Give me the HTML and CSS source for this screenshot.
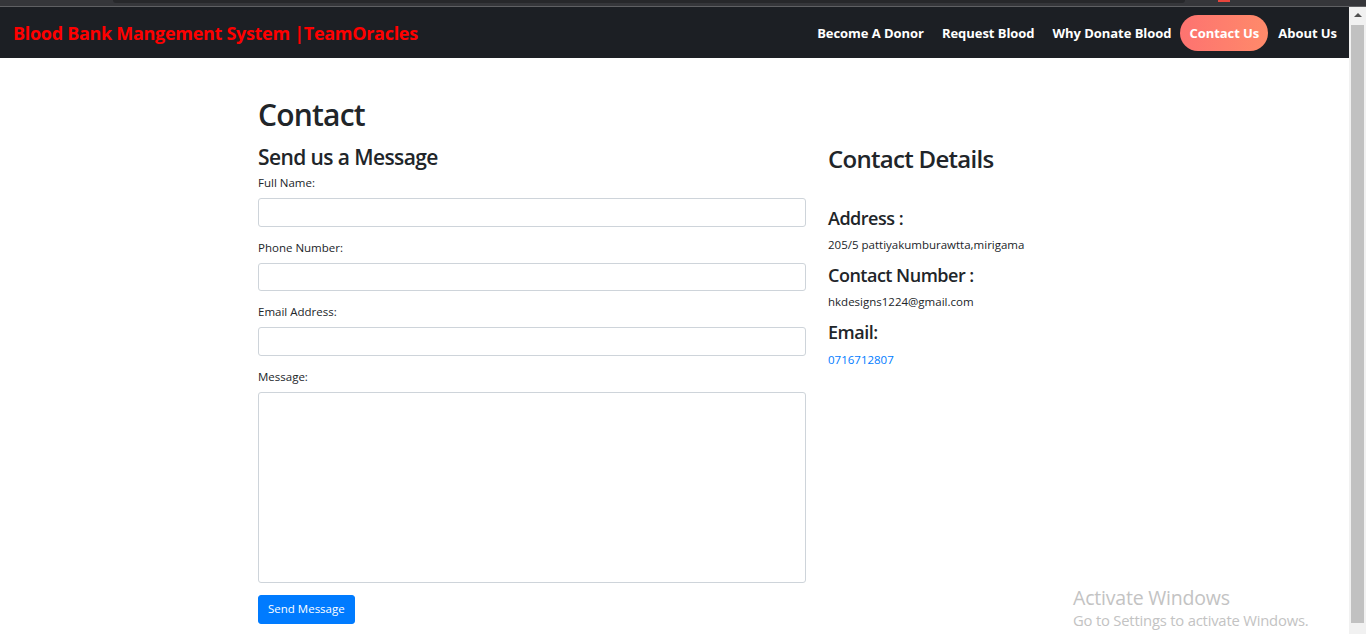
FILE: index.html
```html
<!DOCTYPE html>
<html lang="en">
<head>
<meta charset="utf-8">
<title>Contact | Blood Bank Mangement System</title>
<link rel="stylesheet" href="styles.css">
</head>
<body>
<div class="chrome">
  <div class="chrome-tabs"></div>
  <div class="chrome-rec"></div>
</div>
<div class="window">
  <div class="page">
    <nav class="navbar">
      <a class="brand" href="#">Blood Bank Mangement System |TeamOracles</a>
      <ul class="nav">
        <li><a class="nav-link" href="#">Become A Donor</a></li>
        <li><a class="nav-link" href="#">Request Blood</a></li>
        <li><a class="nav-link" href="#">Why Donate Blood</a></li>
        <li><a class="nav-link active" href="#">Contact Us</a></li>
        <li><a class="nav-link" href="#">About Us</a></li>
      </ul>
    </nav>
    <main class="container">
      <h1 class="title">Contact</h1>
      <div class="row">
        <section class="col-form">
          <h3 class="sub">Send us a Message</h3>
          <form>
            <div class="group">
              <label>Full Name:</label>
              <input class="control" type="text">
            </div>
            <div class="group">
              <label>Phone Number:</label>
              <input class="control" type="text">
            </div>
            <div class="group">
              <label>Email Address:</label>
              <input class="control" type="text">
            </div>
            <div class="group">
              <label>Message:</label>
              <textarea class="control area"></textarea>
            </div>
            <button class="btn" type="button">Send Message</button>
          </form>
        </section>
        <section class="col-info">
          <h2 class="details">Contact Details</h2>
          <h4 class="item first">Address :</h4>
          <p class="val">205/5 pattiyakumburawtta,mirigama</p>
          <h4 class="item">Contact Number :</h4>
          <p class="val">hkdesigns1224@gmail.com</p>
          <h4 class="item">Email:</h4>
          <p class="val"><a class="link" href="#">0716712807</a></p>
        </section>
      </div>
    </main>
  </div>
  <div class="scrollbar">
    <div class="arrow"></div>
    <div class="thumb"></div>
  </div>
</div>
<div class="watermark">
  <div class="wm-title">Activate Windows</div>
  <div class="wm-sub">Go to Settings to activate Windows.</div>
</div>
</body>
</html>
```
FILE: styles.css
```css
* { box-sizing: border-box; }
html, body { margin: 0; padding: 0; }
body {
  width: 1366px;
  height: 634px;
  overflow: hidden;
  font-family: "Open Sans", "Noto Sans", sans-serif;
  color: #212529;
  background: #fff;
  position: relative;
}
.chrome {
  height: 7px;
  background: #35363a;
  border-bottom: 1px solid #5f6063;
  display: flex;
  align-items: flex-start;
}
.chrome-tabs {
  width: 1072px;
  height: 3px;
  background: #27282b;
  border-bottom-left-radius: 4px;
  border-bottom-right-radius: 4px;
  margin-left: 113px;
}
.chrome-rec {
  width: 12px;
  height: 2px;
  background: #e8453c;
  margin-left: 33px;
}
.window {
  display: flex;
  height: 627px;
}
.page {
  flex: 1;
  min-width: 0;
}
.navbar {
  height: 51px;
  background: #1c1f24;
  display: flex;
  align-items: center;
  padding: 0 3px 0 13px;
}
.brand {
  color: #ff0000;
  font-weight: 700;
  font-size: 18px;
  text-decoration: none;
  letter-spacing: -0.3px;
}
.nav {
  list-style: none;
  margin: 0 0 0 auto;
  padding: 0;
  display: flex;
  align-items: center;
}
.nav-link {
  display: block;
  color: #fff;
  font-weight: 700;
  font-size: 13px;
  text-decoration: none;
  padding: 0 9px;
  line-height: 36px;
  height: 36px;
  letter-spacing: -0.05px;
}
.nav-link.active {
  background: linear-gradient(90deg, #fd7370, #ff8a6a);
  border-radius: 18px;
  margin-right: 1px;
}
.container {
  width: 855px;
  margin: 0 auto;
  padding: 39px 11px 0;
}
.title {
  font-size: 30px;
  font-weight: 600;
  line-height: 36px;
  margin: 0 0 12px;
  letter-spacing: -0.8px;
}
.row {
  display: grid;
  grid-template-columns: 548px 1fr;
  column-gap: 22px;
}
.sub {
  font-size: 21px;
  font-weight: 600;
  line-height: 25.2px;
  margin: 0 0 4px;
  letter-spacing: -0.6px;
}
.group {
  margin-bottom: 12px;
}
label {
  display: block;
  font-size: 11.5px;
  line-height: 18px;
  margin-bottom: 6px;
  color: #212529;
}
.control {
  display: block;
  width: 100%;
  height: 28.5px;
  border: 1px solid #ced4da;
  border-radius: 3px;
  background: #fff;
  font: inherit;
  margin: 0;
  padding: 0;
}
.area {
  height: 191px;
  resize: none;
}
.btn {
  display: block;
  height: 29px;
  padding: 0 9px;
  background: #007bff;
  border: 1px solid #007bff;
  border-radius: 3px;
  color: #fff;
  font-family: inherit;
  font-size: 11.5px;
  line-height: 26px;
}
.details {
  font-size: 24px;
  font-weight: 600;
  line-height: 28.8px;
  margin: 0 0 6px;
  letter-spacing: -0.7px;
}
.item {
  font-size: 18px;
  font-weight: 600;
  line-height: 21.6px;
  margin: 0 0 7px;
  letter-spacing: -0.5px;
}
.item.first {
  margin-top: 34px;
}
.val {
  font-size: 11.5px;
  line-height: 18px;
  margin: 0 0 10.5px;
}
.link {
  color: #007bff;
  text-decoration: none;
}
.scrollbar {
  width: 17px;
  flex: none;
  background: #f1f1f1;
  display: flex;
  flex-direction: column;
  align-items: center;
  padding-top: 6px;
}
.arrow {
  width: 0;
  height: 0;
  border-left: 4px solid transparent;
  border-right: 4px solid transparent;
  border-bottom: 4px solid #505050;
}
.thumb {
  width: 13px;
  height: 598px;
  margin-top: 8px;
  background: #c1c1c1;
}
.watermark {
  position: absolute;
  left: 1073px;
  top: 586px;
  color: #c3c3c3;
  font-family: "Open Sans", sans-serif;
}
.wm-title {
  font-size: 19.5px;
  line-height: 24px;
  letter-spacing: -0.2px;
}
.wm-sub {
  font-size: 14.8px;
  line-height: 20px;
  letter-spacing: -0.2px;
}
```
